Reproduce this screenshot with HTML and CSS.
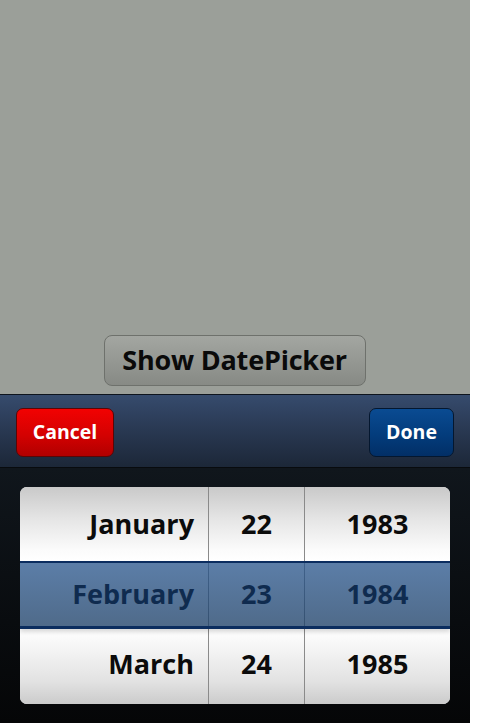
FILE: index.html
```html
<!DOCTYPE html>
<html>
<head>
<meta charset="utf-8">
<link rel="stylesheet" href="styles.css">
</head>
<body>
<div class="app">
  <div class="top">
    <button class="show-btn">Show DatePicker</button>
  </div>
  <div class="toolbar">
    <button class="tb-btn cancel">Cancel</button>
    <button class="tb-btn done">Done</button>
  </div>
  <div class="sheet">
    <div class="picker">
      <div class="col month">
        <div class="cell upper">January</div>
        <div class="cell mid">February</div>
        <div class="cell lower">March</div>
      </div>
      <div class="col day">
        <div class="cell upper">22</div>
        <div class="cell mid">23</div>
        <div class="cell lower">24</div>
      </div>
      <div class="col year">
        <div class="cell upper">1983</div>
        <div class="cell mid">1984</div>
        <div class="cell lower">1985</div>
      </div>
      <div class="band"></div>
    </div>
  </div>
</div>
</body>
</html>
```
FILE: styles.css
```css
html, body {
  margin: 0;
  padding: 0;
  background: #ffffff;
}
.app {
  width: 470px;
  height: 723px;
  display: flex;
  flex-direction: column;
  font-family: "Open Sans", "DejaVu Sans", sans-serif;
  font-weight: 700;
}
.top {
  height: 394px;
  background: #9b9f99;
  display: flex;
  justify-content: center;
  align-items: flex-end;
  padding-bottom: 8px;
  box-sizing: border-box;
}
.show-btn {
  width: 262px;
  height: 51px;
  margin-left: -1px;
  border: 1px solid #6e716c;
  border-radius: 8px;
  background: linear-gradient(#a3a6a1, #878a85);
  font-family: inherit;
  font-weight: 700;
  font-size: 27px;
  color: #0a0a0a;
  padding: 0 0 2px;
  letter-spacing: -0.2px;
}
.toolbar {
  height: 74px;
  box-sizing: border-box;
  border-top: 1px solid #0e141d;
  border-bottom: 1px solid #080b0e;
  background: linear-gradient(#364b6d, #2a3a54 45%, #1c2738);
  display: flex;
  justify-content: space-between;
  align-items: flex-start;
  padding: 13px 16px 0 16px;
}
.tb-btn {
  height: 49px;
  border-radius: 7px;
  font-family: inherit;
  font-weight: 700;
  font-size: 19.5px;
  color: #ffffff;
  padding: 0 0 2px;
}
.cancel {
  width: 98px;
  border: 1px solid #5a0606;
  background: linear-gradient(#f20202, #d40101 55%, #b10000);
}
.done {
  width: 85px;
  border: 1px solid #04172f;
  background: linear-gradient(#0a4b92, #033c7c 55%, #022f66);
}
.sheet {
  flex: 1;
  background: linear-gradient(#10161c, #090c0f 60%, #050607);
  padding: 19px 20px 0 20px;
}
.picker {
  position: relative;
  width: 430px;
  height: 217px;
  border-radius: 7px;
  overflow: hidden;
  display: grid;
  grid-template-columns: 189px 96px 145px;
  background: #ffffff;
}
.col {
  display: grid;
  grid-template-rows: 74px 68px 75px;
  border-right: 1px solid #8a8a8a;
}
.col.year {
  border-right: none;
}
.cell {
  display: flex;
  align-items: center;
  justify-content: center;
  font-size: 27px;
  color: #0b0b0b;
}
.month .cell {
  justify-content: flex-end;
  padding-right: 14px;
}
.upper {
  background: linear-gradient(#c9c9c9, #e6e6e6 45%, #fbfbfb 85%, #ffffff);
  padding-bottom: 2px;
}
.mid {
  color: #0f2b4f;
  position: relative;
  z-index: 2;
  background: transparent;
  padding-bottom: 4px;
}
.lower {
  background: linear-gradient(#ffffff, #f7f7f7 20%, #e2e2e2 70%, #cbcbcb);
  padding-bottom: 7px;
}
.band {
  position: absolute;
  left: 0;
  right: 0;
  top: 74px;
  height: 68px;
  box-sizing: border-box;
  border-top: 2px solid #0b2d5f;
  border-bottom: 3px solid #0b2d5f;
  background: linear-gradient(rgba(40, 85, 140, 0.76), rgba(30, 65, 105, 0.78));
  box-shadow: 0 3px 4px rgba(0, 0, 0, 0.15);
  z-index: 1;
}
```
